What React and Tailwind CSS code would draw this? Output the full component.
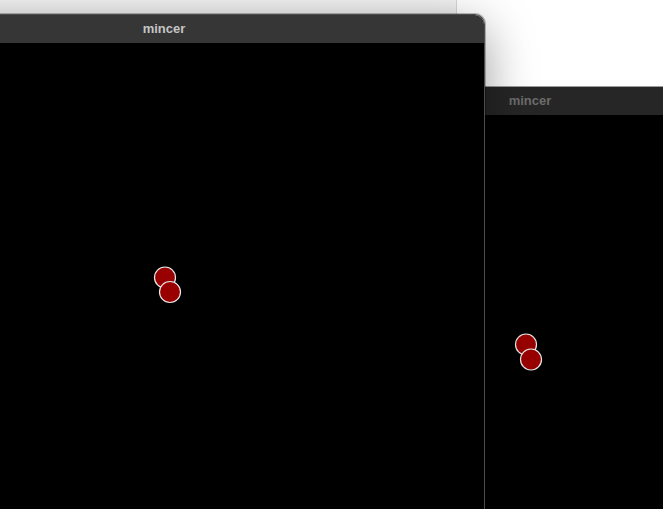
const RED = '#990000'

function Dots({ dots }) {
  return (
    <svg className="absolute inset-0 w-full h-full" xmlns="http://www.w3.org/2000/svg">
      {dots.map((d, i) => (
        <circle key={i} cx={d[0]} cy={d[1]} r="10.5" fill={RED} stroke="#e8e8e8" strokeWidth="1.2" />
      ))}
    </svg>
  )
}

function Window({ className, barClass, titleClass, dots }) {
  return (
    <div className={'absolute flex flex-col ' + className}>
      <div className={'h-[28px] shrink-0 flex items-center justify-center pb-[2px] ' + barClass}>
        <span className={'text-[13px] font-bold leading-none ' + titleClass}>mincer</span>
      </div>
      <div className="relative flex-1 bg-black">
        <Dots dots={dots} />
      </div>
    </div>
  )
}

export default function App() {
  return (
    <div
      className="relative w-[663px] h-[509px] overflow-hidden bg-white"
      style={{ fontFamily: '"Liberation Sans", Arial, sans-serif' }}
    >
      {/* desktop strip behind */}
      <div className="absolute left-0 top-0 w-[456px] h-[15px] bg-gradient-to-b from-[#f3f3f3] to-[#ececec]" />
      <div className="absolute left-[456px] top-0 w-px h-[15px] bg-[#d6d6d6]" />

      {/* back window */}
      <Window
        className="left-[397px] top-[86px] w-[266px] h-[430px] border-t border-[#9c9c9c]"
        barClass="bg-[#262626]"
        titleClass="text-[#6c6c6c]"
        dots={[[129, 229.5], [134, 244.5]]}
      />

      {/* front window */}
      <Window
        className="left-[-156px] top-[14px] w-[641px] h-[520px] rounded-tr-[10px] overflow-hidden border-t border-r border-[#4c4c4c] shadow-[0_0_0_1px_rgba(0,0,0,0.25),0_14px_50px_rgba(0,0,0,0.4)]"
        barClass="bg-[#363636]"
        titleClass="text-[#c4c4c4]"
        dots={[[321, 234.5], [326, 249]]}
      />
    </div>
  )
}
